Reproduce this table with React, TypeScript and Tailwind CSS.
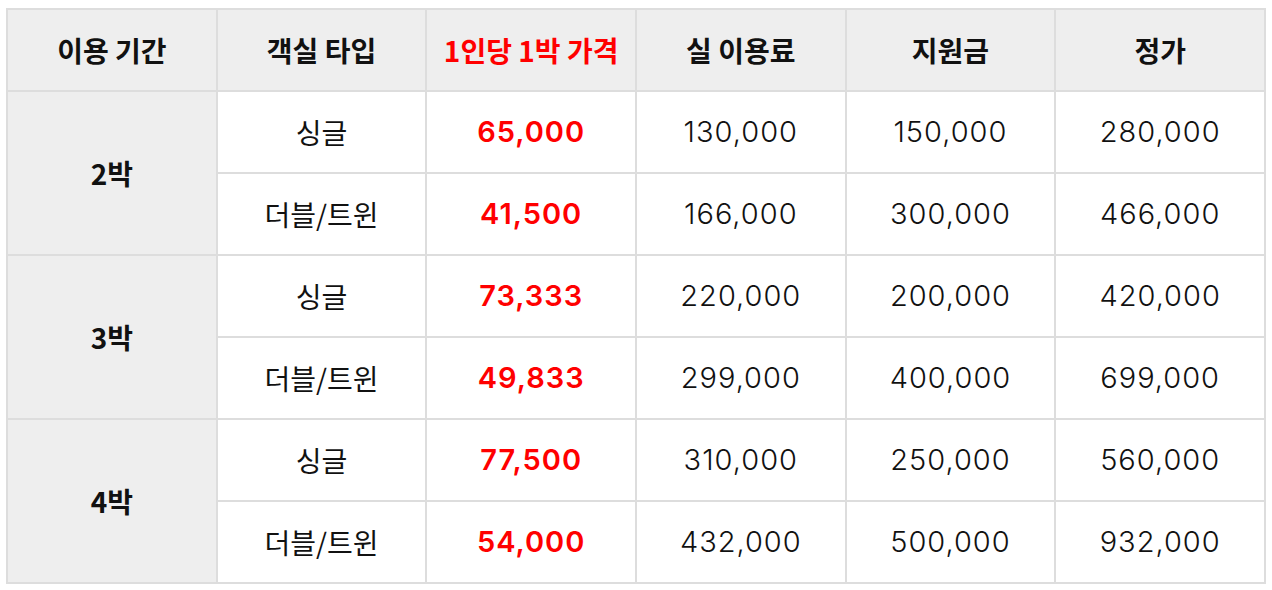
import React from "react";

type Row = {
  period?: string;
  room: string;
  perPerson: string;
  actual: string;
  subsidy: string;
  list: string;
};

const rows: Row[] = [
  { period: "2박", room: "싱글", perPerson: "65,000", actual: "130,000", subsidy: "150,000", list: "280,000" },
  { room: "더블/트윈", perPerson: "41,500", actual: "166,000", subsidy: "300,000", list: "466,000" },
  { period: "3박", room: "싱글", perPerson: "73,333", actual: "220,000", subsidy: "200,000", list: "420,000" },
  { room: "더블/트윈", perPerson: "49,833", actual: "299,000", subsidy: "400,000", list: "699,000" },
  { period: "4박", room: "싱글", perPerson: "77,500", actual: "310,000", subsidy: "250,000", list: "560,000" },
  { room: "더블/트윈", perPerson: "54,000", actual: "432,000", subsidy: "500,000", list: "932,000" },
];

const headers = ["이용 기간", "객실 타입", "1인당 1박 가격", "실 이용료", "지원금", "정가"];

const cell = "border-2 border-[#dddddd] h-[82px] p-0 text-center align-middle";
const num = "font-['Inter','Noto_Sans',sans-serif] text-[29px] tracking-[1px]";

export default function App() {
  return (
    <div className="bg-white w-[1272px] h-[590px] pt-[8px] pl-[6px] font-['Noto_Sans_CJK_KR','Noto_Sans',sans-serif] text-[28px] text-[#111111]">
      <table className="w-[1260px] table-fixed border-collapse">
        <thead>
          <tr className="bg-[#eeeeee]">
            {headers.map((h, i) => (
              <th
                key={h}
                className={`${cell} font-bold ${i === 2 ? "text-[#ff0000]" : "text-[#111111]"}`}
              >
                {h}
              </th>
            ))}
          </tr>
        </thead>
        <tbody>
          {rows.map((r, i) => (
            <tr key={i}>
              {r.period && (
                <td rowSpan={2} className={`${cell} bg-[#eeeeee] font-bold`}>
                  {r.period}
                </td>
              )}
              <td className={cell}>{r.room}</td>
              <td className={`${cell} ${num} font-semibold text-[#ff0000]`}>{r.perPerson}</td>
              <td className={`${cell} ${num} font-light`}>{r.actual}</td>
              <td className={`${cell} ${num} font-light`}>{r.subsidy}</td>
              <td className={`${cell} ${num} font-light`}>{r.list}</td>
            </tr>
          ))}
        </tbody>
      </table>
    </div>
  );
}
